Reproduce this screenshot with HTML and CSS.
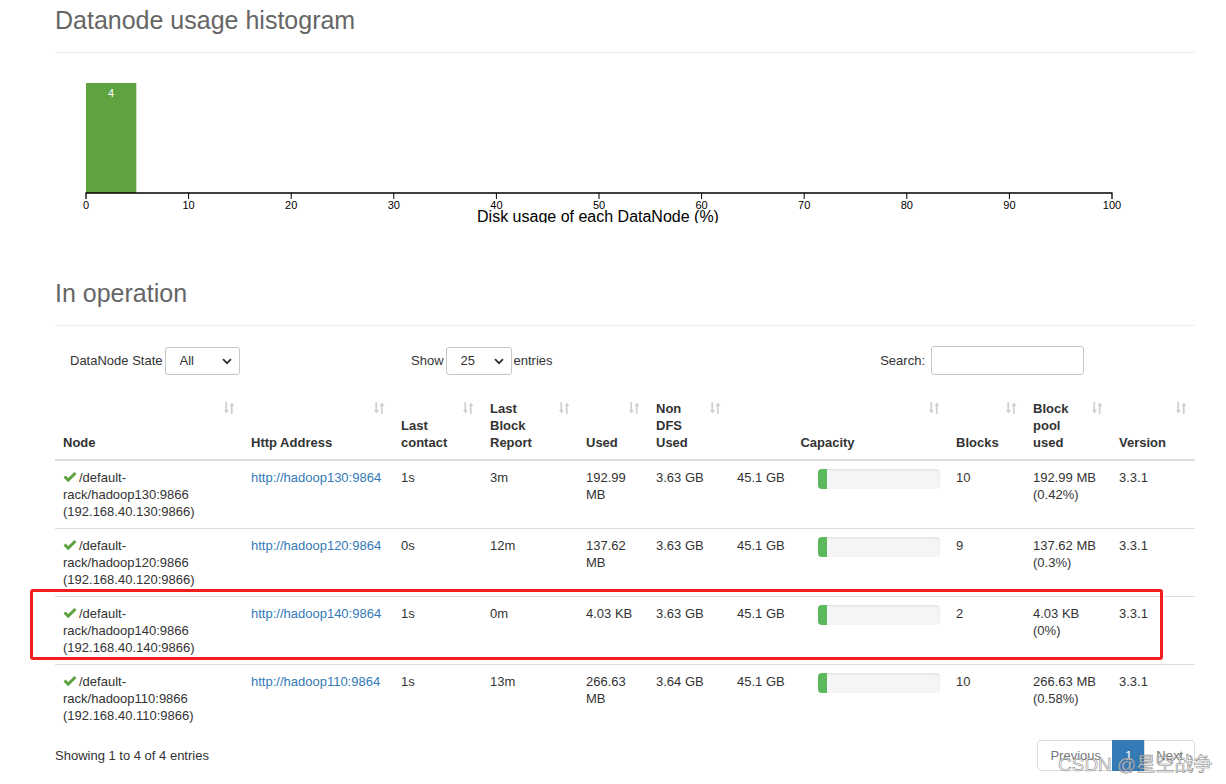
FILE: index.html
```html
<!DOCTYPE html>
<html>
<head>
<meta charset="utf-8">
<title>Datanode Information</title>
<link rel="stylesheet" href="styles.css">
</head>
<body>
<div class="container">
  <div class="page-header first"><h2>Datanode usage histogram</h2></div>
  <svg class="histogram" width="1140" height="161" viewBox="0 0 1140 161">
    <g transform="translate(31,0)">
      <rect x="0" y="21" width="50.3" height="110" fill="#5fa33f"/>
      <text x="25" y="35" class="bar-label">4</text>
      <path d="M0 137V131H1026V137" fill="none" stroke="#000" stroke-width="1.3"/>
      <g class="ticks" stroke="#000" stroke-width="1">
        <line x1="102.6" y1="131" x2="102.6" y2="137"/>
        <line x1="205.2" y1="131" x2="205.2" y2="137"/>
        <line x1="307.8" y1="131" x2="307.8" y2="137"/>
        <line x1="410.4" y1="131" x2="410.4" y2="137"/>
        <line x1="513" y1="131" x2="513" y2="137"/>
        <line x1="615.6" y1="131" x2="615.6" y2="137"/>
        <line x1="718.2" y1="131" x2="718.2" y2="137"/>
        <line x1="820.8" y1="131" x2="820.8" y2="137"/>
        <line x1="923.4" y1="131" x2="923.4" y2="137"/>
      </g>
      <g class="tick-labels">
        <text x="0" y="147">0</text>
        <text x="102.6" y="147">10</text>
        <text x="205.2" y="147">20</text>
        <text x="307.8" y="147">30</text>
        <text x="410.4" y="147">40</text>
        <text x="513" y="147">50</text>
        <text x="615.6" y="147">60</text>
        <text x="718.2" y="147">70</text>
        <text x="820.8" y="147">80</text>
        <text x="923.4" y="147">90</text>
        <text x="1026" y="147">100</text>
      </g>
      <text x="512" y="160" class="axis-title">Disk usage of each DataNode (%)</text>
    </g>
  </svg>

  <div class="page-header second"><h2>In operation</h2></div>

  <div class="controls">
    <div class="state">
      <label>DataNode State</label>
      <span class="select-wrap w-state">
        <select><option>All</option></select>
        <svg class="chev" width="10" height="7" viewBox="0 0 10 7"><path d="M1 1.2l4 4 4-4" fill="none" stroke="#333" stroke-width="1.8"/></svg>
      </span>
    </div>
    <div class="length">
      <span>Show</span>
      <span class="select-wrap w-len">
        <select><option>25</option></select>
        <svg class="chev" width="10" height="7" viewBox="0 0 10 7"><path d="M1 1.2l4 4 4-4" fill="none" stroke="#333" stroke-width="1.8"/></svg>
      </span>
      <span>entries</span>
    </div>
    <div class="filter">
      <span>Search:</span>
      <input type="search" class="search">
    </div>
  </div>

  <table class="nodes">
    <colgroup>
      <col style="width:188px"><col style="width:150px"><col style="width:89px"><col style="width:96px">
      <col style="width:70px"><col style="width:81px"><col style="width:81px"><col style="width:138px">
      <col style="width:77px"><col style="width:86px"><col style="width:84px">
    </colgroup>
    <thead>
      <tr>
        <th>Node<svg class="sort" width="12" height="12" viewBox="0 0 12 12"><rect x="2.4" y="0" width="1.7" height="8.5"/><path d="M0.9 8h5l-2.5 3.6z"/><rect x="7.9" y="3.5" width="1.7" height="8.5"/><path d="M6.4 4h5L8.9 0.4z"/></svg></th>
        <th>Http Address<svg class="sort" width="12" height="12" viewBox="0 0 12 12"><rect x="2.4" y="0" width="1.7" height="8.5"/><path d="M0.9 8h5l-2.5 3.6z"/><rect x="7.9" y="3.5" width="1.7" height="8.5"/><path d="M6.4 4h5L8.9 0.4z"/></svg></th>
        <th>Last contact<svg class="sort" width="12" height="12" viewBox="0 0 12 12"><rect x="2.4" y="0" width="1.7" height="8.5"/><path d="M0.9 8h5l-2.5 3.6z"/><rect x="7.9" y="3.5" width="1.7" height="8.5"/><path d="M6.4 4h5L8.9 0.4z"/></svg></th>
        <th>Last Block Report<svg class="sort" width="12" height="12" viewBox="0 0 12 12"><rect x="2.4" y="0" width="1.7" height="8.5"/><path d="M0.9 8h5l-2.5 3.6z"/><rect x="7.9" y="3.5" width="1.7" height="8.5"/><path d="M6.4 4h5L8.9 0.4z"/></svg></th>
        <th>Used<svg class="sort" width="12" height="12" viewBox="0 0 12 12"><rect x="2.4" y="0" width="1.7" height="8.5"/><path d="M0.9 8h5l-2.5 3.6z"/><rect x="7.9" y="3.5" width="1.7" height="8.5"/><path d="M6.4 4h5L8.9 0.4z"/></svg></th>
        <th>Non DFS Used<svg class="sort" width="12" height="12" viewBox="0 0 12 12"><rect x="2.4" y="0" width="1.7" height="8.5"/><path d="M0.9 8h5l-2.5 3.6z"/><rect x="7.9" y="3.5" width="1.7" height="8.5"/><path d="M6.4 4h5L8.9 0.4z"/></svg></th>
        <th colspan="2" class="center">Capacity<svg class="sort" width="12" height="12" viewBox="0 0 12 12"><rect x="2.4" y="0" width="1.7" height="8.5"/><path d="M0.9 8h5l-2.5 3.6z"/><rect x="7.9" y="3.5" width="1.7" height="8.5"/><path d="M6.4 4h5L8.9 0.4z"/></svg></th>
        <th>Blocks<svg class="sort" width="12" height="12" viewBox="0 0 12 12"><rect x="2.4" y="0" width="1.7" height="8.5"/><path d="M0.9 8h5l-2.5 3.6z"/><rect x="7.9" y="3.5" width="1.7" height="8.5"/><path d="M6.4 4h5L8.9 0.4z"/></svg></th>
        <th>Block pool used<svg class="sort" width="12" height="12" viewBox="0 0 12 12"><rect x="2.4" y="0" width="1.7" height="8.5"/><path d="M0.9 8h5l-2.5 3.6z"/><rect x="7.9" y="3.5" width="1.7" height="8.5"/><path d="M6.4 4h5L8.9 0.4z"/></svg></th>
        <th>Version<svg class="sort" width="12" height="12" viewBox="0 0 12 12"><rect x="2.4" y="0" width="1.7" height="8.5"/><path d="M0.9 8h5l-2.5 3.6z"/><rect x="7.9" y="3.5" width="1.7" height="8.5"/><path d="M6.4 4h5L8.9 0.4z"/></svg></th>
      </tr>
    </thead>
    <tbody>
      <tr>
        <td><svg class="ok" width="14" height="12" viewBox="0 0 14 12"><path d="M0.5 6.6L2.6 4.5 5.2 7.1 11.4 0.9 13.5 3 5.2 11.3z"/></svg>/default-rack/hadoop130:9866 (192.168.40.130:9866)</td>
        <td><a href="#">http://hadoop130:9864</a></td>
        <td>1s</td>
        <td>3m</td>
        <td>192.99 MB</td>
        <td>3.63 GB</td>
        <td>45.1 GB</td>
        <td><div class="progress"><div class="progress-bar" style="width:7.5%"></div></div></td>
        <td>10</td>
        <td>192.99 MB (0.42%)</td>
        <td>3.3.1</td>
      </tr>
      <tr>
        <td><svg class="ok" width="14" height="12" viewBox="0 0 14 12"><path d="M0.5 6.6L2.6 4.5 5.2 7.1 11.4 0.9 13.5 3 5.2 11.3z"/></svg>/default-rack/hadoop120:9866 (192.168.40.120:9866)</td>
        <td><a href="#">http://hadoop120:9864</a></td>
        <td>0s</td>
        <td>12m</td>
        <td>137.62 MB</td>
        <td>3.63 GB</td>
        <td>45.1 GB</td>
        <td><div class="progress"><div class="progress-bar" style="width:7.5%"></div></div></td>
        <td>9</td>
        <td>137.62 MB (0.3%)</td>
        <td>3.3.1</td>
      </tr>
      <tr>
        <td><svg class="ok" width="14" height="12" viewBox="0 0 14 12"><path d="M0.5 6.6L2.6 4.5 5.2 7.1 11.4 0.9 13.5 3 5.2 11.3z"/></svg>/default-rack/hadoop140:9866 (192.168.40.140:9866)</td>
        <td><a href="#">http://hadoop140:9864</a></td>
        <td>1s</td>
        <td>0m</td>
        <td>4.03 KB</td>
        <td>3.63 GB</td>
        <td>45.1 GB</td>
        <td><div class="progress"><div class="progress-bar" style="width:7.5%"></div></div></td>
        <td>2</td>
        <td>4.03 KB (0%)</td>
        <td>3.3.1</td>
      </tr>
      <tr>
        <td><svg class="ok" width="14" height="12" viewBox="0 0 14 12"><path d="M0.5 6.6L2.6 4.5 5.2 7.1 11.4 0.9 13.5 3 5.2 11.3z"/></svg>/default-rack/hadoop110:9866 (192.168.40.110:9866)</td>
        <td><a href="#">http://hadoop110:9864</a></td>
        <td>1s</td>
        <td>13m</td>
        <td>266.63 MB</td>
        <td>3.64 GB</td>
        <td>45.1 GB</td>
        <td><div class="progress"><div class="progress-bar" style="width:7.5%"></div></div></td>
        <td>10</td>
        <td>266.63 MB (0.58%)</td>
        <td>3.3.1</td>
      </tr>
    </tbody>
  </table>

  <div class="table-footer">
    <div class="info">Showing 1 to 4 of 4 entries</div>
    <ul class="pagination">
      <li class="disabled"><a href="#">Previous</a></li>
      <li class="active"><a href="#">1</a></li>
      <li class="disabled"><a href="#">Next</a></li>
    </ul>
  </div>
</div>

<div class="highlight"></div>
<div class="watermark">CSDN @星空战争</div>
</body>
</html>
```
FILE: styles.css
```css
html, body {
  margin: 0;
  padding: 0;
  background: #fff;
}
body {
  font-family: "Liberation Sans", Arial, "Noto Sans CJK SC", sans-serif;
  font-size: 13px;
  line-height: 17px;
  color: #333;
}
.container {
  width: 1140px;
  margin-left: 55px;
}
.page-header {
  border-bottom: 1px solid #eee;
  padding-bottom: 18px;
}
.page-header h2 {
  margin: 0;
  font-size: 25px;
  line-height: 28px;
  font-weight: normal;
  color: #666;
}
.page-header.first {
  margin-top: 6px;
}
.page-header.second {
  margin-top: 56px;
}
.histogram {
  display: block;
  margin-top: 9px;
  font-family: "Liberation Sans", Arial, sans-serif;
}
.bar-label {
  fill: #fff;
  font-size: 11px;
  text-anchor: middle;
}
.tick-labels text {
  font-size: 11px;
  text-anchor: middle;
  fill: #000;
}
.axis-title {
  font-size: 16px;
  text-anchor: middle;
  fill: #000;
}

.controls {
  display: flex;
  align-items: center;
  margin-top: 20px;
  height: 29px;
}
.state {
  width: 341px;
  padding-left: 15px;
  display: flex;
  align-items: center;
  gap: 2px;
}
.length {
  flex: 1;
  display: flex;
  align-items: center;
  gap: 2px;
}
.filter {
  display: flex;
  align-items: center;
  gap: 6px;
  margin-right: 111px;
}
.select-wrap {
  position: relative;
  display: inline-block;
  height: 28px;
}
.select-wrap select {
  -webkit-appearance: none;
  appearance: none;
  height: 28px;
  border: 1px solid #c6c6c6;
  border-radius: 3px;
  background: #fff;
  font-family: inherit;
  font-size: 13px;
  color: #333;
  padding: 0 0 0 14px;
  margin: 0;
  box-sizing: border-box;
}
.w-state select { width: 75px; }
.w-len select { width: 66px; }
.chev {
  position: absolute;
  right: 8px;
  top: 11px;
  pointer-events: none;
}
.search {
  width: 153px;
  height: 29px;
  box-sizing: border-box;
  border: 1px solid #c6c6c6;
  border-radius: 3px;
  margin: 0;
  padding: 0 6px;
}

.nodes {
  margin-top: 17px;
  width: 1140px;
  table-layout: fixed;
  border-collapse: collapse;
  border-spacing: 0;
}
.nodes th {
  position: relative;
  text-align: left;
  vertical-align: bottom;
  font-weight: bold;
  padding: 8px 30px 8px 8px;
  border-bottom: 2px solid #ddd;
}
.nodes th.center {
  text-align: center;
}
.sort {
  position: absolute;
  top: 10px;
  right: 8px;
  fill: #cfcfcf;
}
.nodes td {
  vertical-align: top;
  padding: 8px;
  border-top: 1px solid #ddd;
  height: 51px;
}
.nodes tbody tr:first-child td {
  border-top: 0;
}
.ok {
  fill: #5fa341;
  vertical-align: -1px;
  margin-right: 2px;
}
a {
  color: #337ab7;
  text-decoration: none;
}
.progress {
  height: 20px;
  background: #f5f5f5;
  border-radius: 4px;
  box-shadow: inset 0 1px 2px rgba(0,0,0,.1);
  overflow: hidden;
}
.progress-bar {
  height: 100%;
  background: #5cb85c;
}

.table-footer {
  display: flex;
  align-items: center;
  justify-content: space-between;
  margin-top: 8px;
}
.pagination {
  display: flex;
  list-style: none;
  margin: 0;
  padding: 0;
}
.pagination a {
  display: block;
  padding: 6px 12px;
  border: 1px solid #ddd;
  margin-left: -1px;
  color: #777;
  background: #fff;
}
.pagination li:first-child a {
  margin-left: 0;
  padding: 6px 11px 6px 12px;
  border-radius: 4px 0 0 4px;
}
.pagination li:last-child a {
  padding: 6px 11px;
  border-radius: 0 4px 4px 0;
}
.pagination .active a {
  background: #337ab7;
  border-color: #337ab7;
  color: #fff;
  padding: 6px 12px;
}

.highlight {
  position: absolute;
  left: 30px;
  top: 589px;
  width: 1133px;
  height: 71px;
  box-sizing: border-box;
  border: 3px solid #f01e1e;
  border-radius: 3px;
}
.watermark {
  position: absolute;
  left: 1058px;
  top: 754px;
  font-family: "Liberation Sans", "Noto Sans CJK SC", sans-serif;
  font-size: 19px;
  line-height: 22px;
  color: rgba(255,255,255,0.7);
  -webkit-text-stroke: 0.6px rgba(110,110,110,0.85);
  white-space: nowrap;
}
```
